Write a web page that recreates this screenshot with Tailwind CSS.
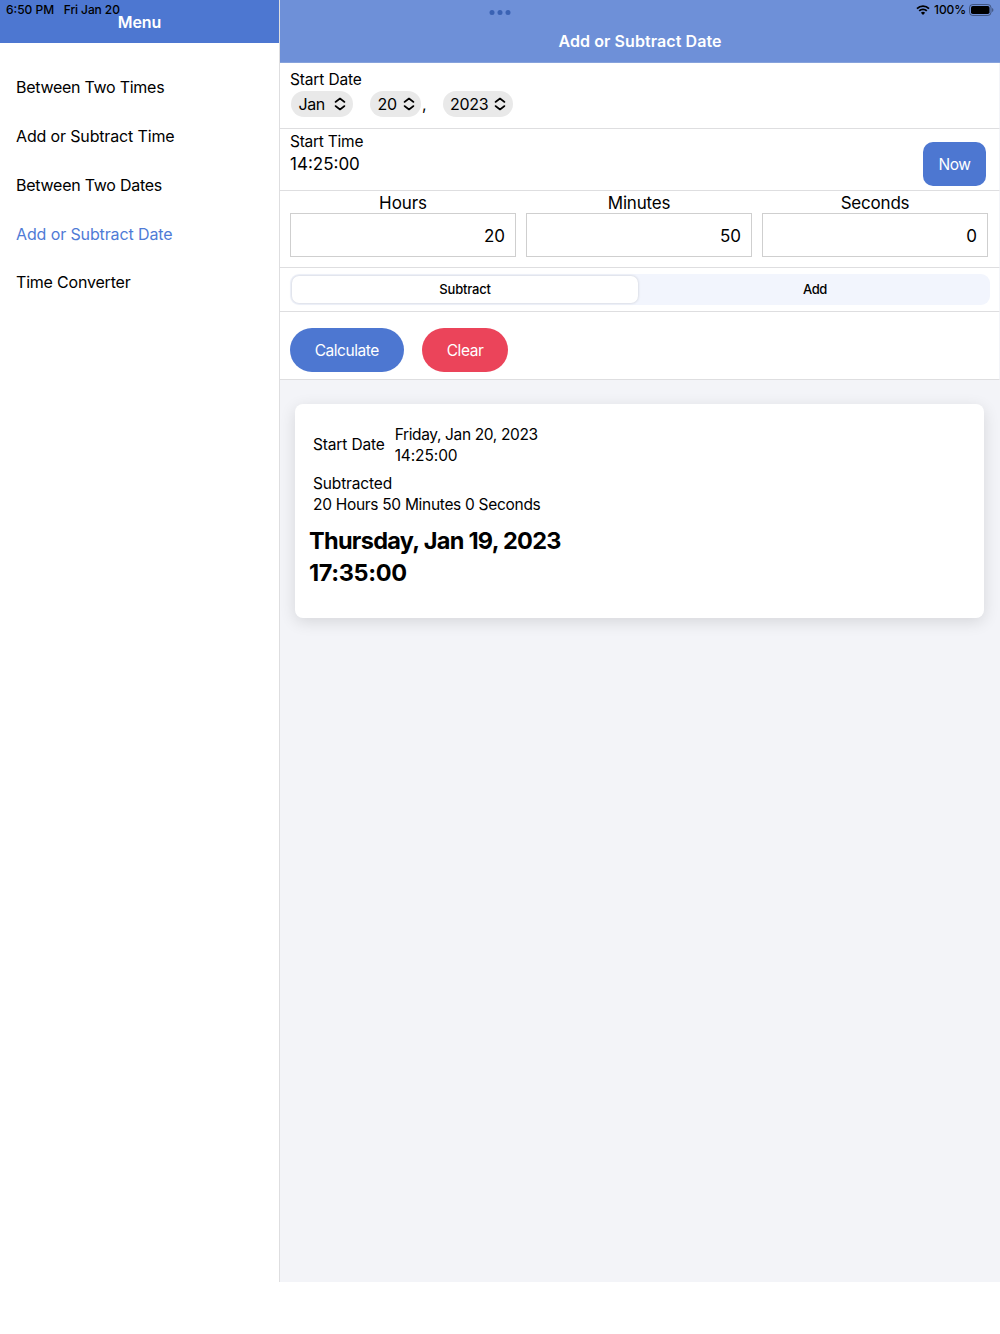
<!DOCTYPE html>
<html lang="en">
<head>
    <meta charset="UTF-8">
    <meta name="viewport" content="width=device-width, initial-scale=1.0">
    <title>Add or Subtract Date</title>
    <script src="https://cdn.jsdelivr.net/npm/@tailwindcss/browser@4"></script>
</head>
<body class="bg-white text-black font-['Inter',sans-serif] text-[16px] leading-5 h-[1334px] overflow-hidden relative">

    <div class="flex h-[1282px]">
        <!-- Menu -->
        <aside class="w-[280px] shrink-0 border-r border-[#dedee0]">
            <header class="h-[43px] bg-[#4d77d1] text-white font-semibold tracking-[-0.1px] flex justify-center items-end pb-[11px]">Menu</header>
            <nav class="pt-5 pl-4 tracking-[-0.2px]">
                <a class="h-[48.8px] flex items-center tracking-[-0.27px]">Between Two Times</a>
                <a class="h-[48.8px] flex items-center tracking-[-0.15px]">Add or Subtract Time</a>
                <a class="h-[48.8px] flex items-center tracking-[-0.25px]">Between Two Dates</a>
                <a class="h-[48.8px] flex items-center tracking-[-0.12px] text-[#4f7bd6]">Add or Subtract Date</a>
                <a class="h-[48px] flex items-center">Time Converter</a>
            </nav>
        </aside>

        <main class="flex-1 bg-[#f3f4f8]">
            <header class="h-[63px] bg-[#6e90d8] text-white font-semibold tracking-[0.08px] flex justify-center items-end pb-[11px] border-b border-[#86a2dc]">Add or Subtract Date</header>

            <!-- Start date -->
            <section class="h-[66px] bg-white border-b border-r border-b-[#dedee0] border-r-[#f3f4f8] pl-[10px] pt-[7px]">
                <div class="text-[15.5px] tracking-[-0.15px]">Start Date</div>
                <div class="flex mt-px pl-px leading-[26px]">
                    <div class="w-[62px] h-[26px] rounded-full bg-[#e9e9e9] flex items-center justify-between pl-[7.5px] pr-[7px]">
                        <span class="tracking-[-0.4px]">Jan</span>
                        <svg class="w-[12px] h-[14px]" viewBox="0 0 12 14" fill="none" stroke="black" stroke-width="1.6" stroke-linecap="round" stroke-linejoin="round"><path d="M1.5 5 6 1.5 10.5 5M1.5 9 6 12.5 10.5 9"/></svg>
                    </div>
                    <div class="w-[51px] h-[26px] ml-[17px] rounded-full bg-[#e9e9e9] flex items-center justify-between pl-[7.5px] pr-[6.5px]">
                        <span class="tracking-[-0.3px]">20</span>
                        <svg class="w-[12px] h-[14px]" viewBox="0 0 12 14" fill="none" stroke="black" stroke-width="1.6" stroke-linecap="round" stroke-linejoin="round"><path d="M1.5 5 6 1.5 10.5 5M1.5 9 6 12.5 10.5 9"/></svg>
                    </div>
                    <span class="w-[21.5px] pl-px">,</span>
                    <div class="w-[70px] h-[26px] rounded-full bg-[#e9e9e9] flex items-center justify-between pl-[7.5px] pr-[6.5px]">
                        <span class="tracking-[-0.3px]">2023</span>
                        <svg class="w-[12px] h-[14px]" viewBox="0 0 12 14" fill="none" stroke="black" stroke-width="1.6" stroke-linecap="round" stroke-linejoin="round"><path d="M1.5 5 6 1.5 10.5 5M1.5 9 6 12.5 10.5 9"/></svg>
                    </div>
                </div>
            </section>

            <!-- Start time -->
            <section class="h-[62px] bg-white border-b border-r border-b-[#dedee0] border-r-[#f3f4f8] pl-[10px] pr-[13px] flex justify-between">
                <div class="pt-[3px]">
                    <div class="text-[15.5px] tracking-[-0.25px]">Start Time</div>
                    <div class="mt-[2px] text-[17px]">14:25:00</div>
                </div>
                <button class="mt-[13px] pt-px w-[63px] h-[44px] rounded-[10px] bg-[#4d77d1] text-white text-[15.5px] tracking-[-0.4px]">Now</button>
            </section>

            <section class="h-[77px] bg-white border-b border-r border-b-[#dedee0] border-r-[#f3f4f8] pl-[10px] pr-[11px] pt-[2px] grid grid-cols-3 gap-[10px] text-[17px]">
                <div>
                    <div class="text-center tracking-[-0.1px]">Hours</div>
                    <div class="h-[44px] border border-[#cfcfcf] flex items-center justify-end pt-px pr-[10px]">20</div>
                </div>
                <div>
                    <div class="text-center tracking-[-0.2px]">Minutes</div>
                    <div class="h-[44px] border border-[#cfcfcf] flex items-center justify-end pt-px pr-[10px]">50</div>
                </div>
                <div>
                    <div class="text-center tracking-[-0.2px]">Seconds</div>
                    <div class="h-[44px] border border-[#cfcfcf] flex items-center justify-end pt-px pr-[10px]">0</div>
                </div>
            </section>

            <section class="h-[44px] bg-white border-b border-r border-b-[#dedee0] border-r-[#f3f4f8] pl-[10px] pr-[9px] pt-[6px]">
                <div class="h-[31px] rounded-[9px] bg-[#f2f5fd] p-[2px] flex text-[13px] font-medium">
                    <div class="w-[346px] rounded-[7px] bg-white shadow-[0_0_3px_rgba(0,0,0,0.18)] flex items-center justify-center pb-px tracking-[-0.2px]">Subtract</div>
                    <div class="flex-1 flex items-center justify-center pl-[4px] pb-px tracking-[-0.4px]">Add</div>
                </div>
            </section>

            <section class="h-[68px] bg-white border-b border-r border-b-[#dedee0] border-r-[#f3f4f8] pl-[9.5px] pt-[16px] flex gap-[18px] text-white text-[15.5px] tracking-[-0.45px]">
                <button class="w-[114.5px] h-[44px] pt-px rounded-full bg-[#4d77d1]">Calculate</button>
                <button class="w-[86px] h-[44px] pt-px rounded-full bg-[#eb445a]">Clear</button>
            </section>

            <!-- Result -->
            <section class="ml-[15.4px] mr-4 mt-6 h-[214px] rounded-[8px] bg-white shadow-[0_4px_16px_rgba(0,0,0,0.12)] pt-5 pl-[14.6px] text-[15.5px]">
                <div class="flex items-center pl-[3px]">
                    <div class="tracking-[-0.15px]">Start Date</div>
                    <div class="ml-[10px] leading-[21px]">
                        <div class="tracking-[-0.36px]">Friday, Jan 20, 2023</div>
                        <div class="tracking-[-0.1px]">14:25:00</div>
                    </div>
                </div>
                <div class="mt-[7px] pl-[3px] leading-[21px]">
                    <div class="tracking-[-0.15px]">Subtracted</div>
                    <div class="tracking-[-0.3px]">20 Hours 50 Minutes 0 Seconds</div>
                </div>
                <div class="mt-[10px] -ml-px text-[23.5px] font-bold leading-8">
                    <div class="tracking-[-0.7px]">Thursday, Jan 19, 2023</div>
                    <div class="tracking-[-0.35px]">17:35:00</div>
                </div>
            </section>
        </main>
    </div>

    <!-- Status bar -->
    <div class="absolute top-0 left-0 w-full h-5 pl-[6px] pr-[6px] flex items-center text-[12px] font-medium">
        <span>6:50 PM</span>
        <span class="ml-[9.5px] tracking-[-0.1px]">Fri Jan 20</span>
        <svg class="ml-auto w-[14px] h-[10px]" viewBox="0 0 14 10"><path d="M1 3.6a8.6 8.6 0 0 1 12 0M3.2 5.9a5.4 5.4 0 0 1 7.6 0" fill="none" stroke="black" stroke-width="1.8"/><path d="M7 9.9 4.9 7.8a3 3 0 0 1 4.2 0z"/></svg>
        <span class="ml-1 tracking-[-0.1px]">100%</span>
        <svg class="ml-[3px] w-[25px] h-[12px]" viewBox="0 0 25 12"><rect x=".5" y=".5" width="21.5" height="11" rx="3.2" fill="none" stroke="black" stroke-opacity=".4"/><rect x="2" y="2" width="18.5" height="8" rx="1.8"/><path d="M23.2 4v4c1.6-.6 1.6-3.4 0-4z" fill-opacity=".45"/></svg>
    </div>
    <svg class="absolute left-[489px] top-[10px] w-[22px] h-[5px]" viewBox="0 0 22 5" fill="#3a62b3"><circle cx="3" cy="2.5" r="2.5"/><circle cx="11" cy="2.5" r="2.5"/><circle cx="19" cy="2.5" r="2.5"/></svg>
</body>
</html>
